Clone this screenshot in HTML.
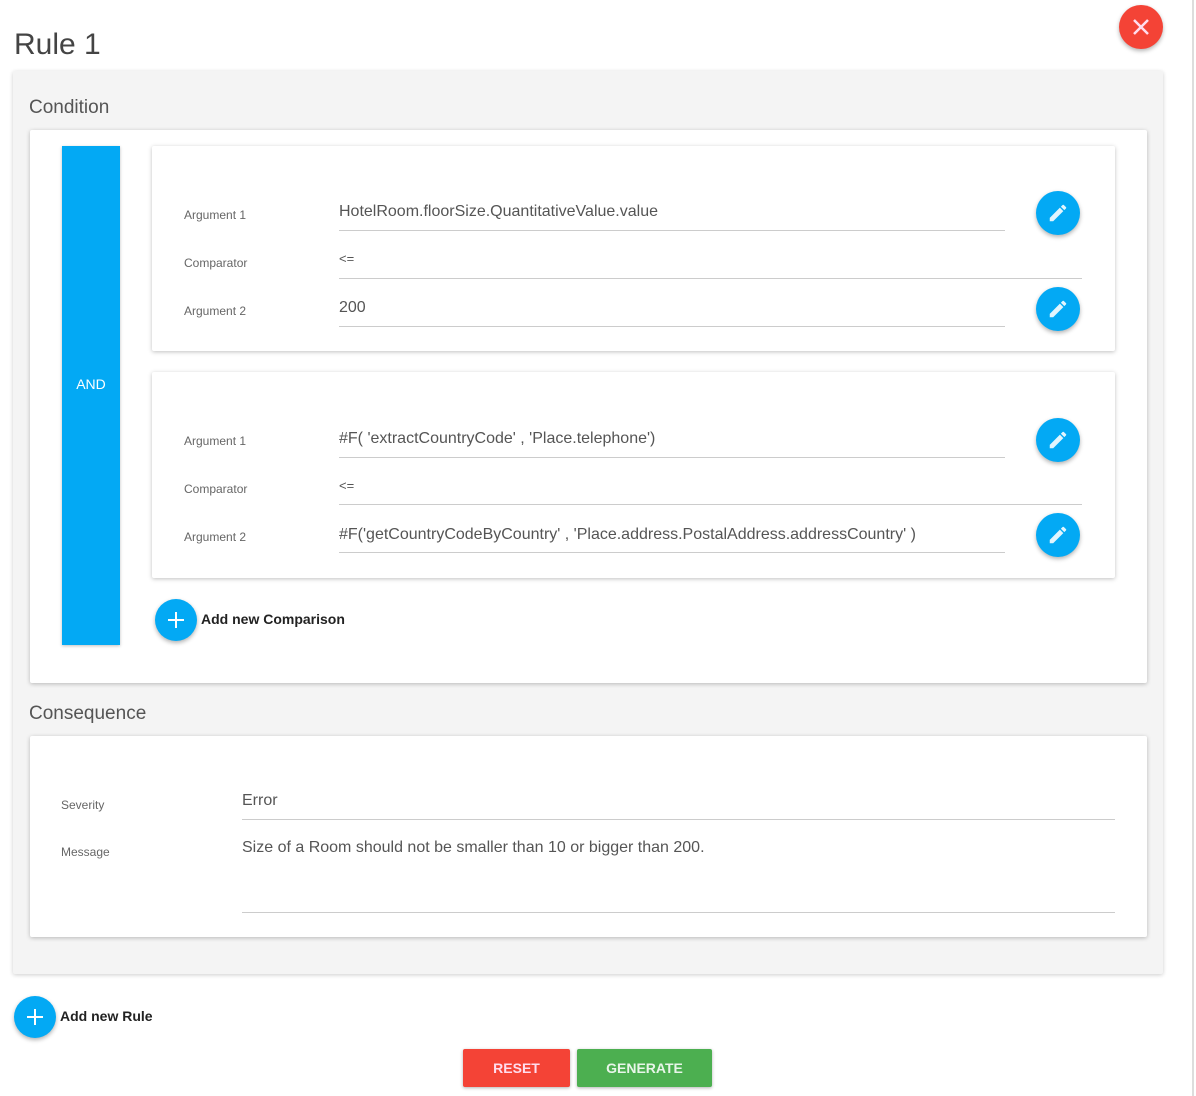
<!DOCTYPE html>
<html><head><meta charset="utf-8"><style>
*{box-sizing:border-box;margin:0;padding:0}
body{width:1196px;height:1096px;background:#fff;font-family:"Liberation Sans",sans-serif;position:relative;overflow:hidden;color:#333}
.a{position:absolute}
.card{position:absolute;background:#fff;box-shadow:0 1px 4px rgba(0,0,0,.25);border-radius:2px}
.lbl{position:absolute;font-size:12px;color:#666;line-height:14px}
.val{position:absolute;font-size:16px;color:#555;line-height:18px}
.ln{position:absolute;height:1px;background:#ccc}
.fab{position:absolute;border-radius:50%;background:#03a9f4;box-shadow:0 2px 4px rgba(0,0,0,.3);display:flex;align-items:center;justify-content:center}
.bold{position:absolute;font-size:14px;font-weight:bold;color:#222}
</style></head><body>
<div class="a" style="left:1192px;top:0;width:2px;height:1096px;background:#ddd"></div>
<div class="a" style="left:14px;top:26px;font-size:30px;color:#444;line-height:38px">Rule 1</div>
<div class="fab" style="left:1119px;top:5px;width:44px;height:44px;background:#f44336">
<svg width="18" height="18" viewBox="0 0 18 18"><path d="M2 2L16 16M16 2L2 16" stroke="#fde" stroke-width="2.5"/></svg></div>

<div class="a" style="left:13px;top:71px;width:1150px;height:903px;background:#f4f4f4;box-shadow:0 1px 4px rgba(0,0,0,.2);border-radius:2px"></div>
<div class="a" style="left:29px;top:97px;font-size:19px;color:#555;line-height:22px">Condition</div>
<div class="card" style="left:30px;top:130px;width:1117px;height:553px"></div>
<div class="a" style="left:62px;top:146px;width:58px;height:499px;background:#03a9f4;box-shadow:0 1px 3px rgba(0,0,0,.25)"></div>
<div class="a" style="left:62px;top:376px;width:58px;text-align:center;color:#fff;font-size:14px">AND</div>

<div class="card" style="left:152px;top:146px;width:963px;height:205px"></div>
<div class="lbl" style="left:184px;top:208px">Argument 1</div>
<div class="val" style="left:339px;top:203px">HotelRoom.floorSize.QuantitativeValue.value</div>
<div class="ln" style="left:339px;top:230px;width:666px"></div>
<div class="lbl" style="left:184px;top:256px">Comparator</div>
<div class="val" style="left:339px;top:250px;font-size:13px">&lt;=</div>
<div class="ln" style="left:339px;top:278px;width:743px"></div>
<div class="lbl" style="left:184px;top:304px">Argument 2</div>
<div class="val" style="left:339px;top:299px">200</div>
<div class="ln" style="left:339px;top:326px;width:666px"></div>

<div class="card" style="left:152px;top:372px;width:963px;height:206px"></div>
<div class="lbl" style="left:184px;top:434px">Argument 1</div>
<div class="val" style="left:339px;top:430px">#F( 'extractCountryCode' , 'Place.telephone')</div>
<div class="ln" style="left:339px;top:457px;width:666px"></div>
<div class="lbl" style="left:184px;top:482px">Comparator</div>
<div class="val" style="left:339px;top:477px;font-size:13px">&lt;=</div>
<div class="ln" style="left:339px;top:504px;width:743px"></div>
<div class="lbl" style="left:184px;top:530px">Argument 2</div>
<div class="val" style="left:339px;top:526px">#F('getCountryCodeByCountry' , 'Place.address.PostalAddress.addressCountry' )</div>
<div class="ln" style="left:339px;top:552px;width:666px"></div>

<div class="fab" style="left:1036px;top:191px;width:44px;height:44px"><svg width="22" height="22" viewBox="0 0 24 24"><path fill="#e1f5fe" d="M3 17.25V21h3.75L17.81 9.94l-3.75-3.75L3 17.25zM20.71 7.04a1 1 0 0 0 0-1.41l-2.34-2.34a1 1 0 0 0-1.41 0l-1.830 1.83 3.75 3.75 1.83-1.83z"/></svg></div>
<div class="fab" style="left:1036px;top:287px;width:44px;height:44px"><svg width="22" height="22" viewBox="0 0 24 24"><path fill="#e1f5fe" d="M3 17.25V21h3.75L17.81 9.94l-3.75-3.75L3 17.25zM20.71 7.04a1 1 0 0 0 0-1.41l-2.34-2.34a1 1 0 0 0-1.41 0l-1.83 1.83 3.75 3.75 1.83-1.83z"/></svg></div>
<div class="fab" style="left:1036px;top:418px;width:44px;height:44px"><svg width="22" height="22" viewBox="0 0 24 24"><path fill="#e1f5fe" d="M3 17.25V21h3.75L17.81 9.94l-3.75-3.75L3 17.25zM20.71 7.04a1 1 0 0 0 0-1.41l-2.34-2.34a1 1 0 0 0-1.41 0l-1.83 1.83 3.75 3.75 1.83-1.83z"/></svg></div>
<div class="fab" style="left:1036px;top:513px;width:44px;height:44px"><svg width="22" height="22" viewBox="0 0 24 24"><path fill="#e1f5fe" d="M3 17.25V21h3.75L17.81 9.94l-3.75-3.75L3 17.25zM20.71 7.04a1 1 0 0 0 0-1.41l-2.34-2.34a1 1 0 0 0-1.41 0l-1.83 1.83 3.75 3.75 1.83-1.83z"/></svg></div>

<div class="fab" style="left:155px;top:599px;width:42px;height:42px"><svg width="18" height="18" viewBox="0 0 18 18"><path d="M9 1V17M1 9H17" stroke="#fff" stroke-width="2"/></svg></div>
<div class="bold" style="left:201px;top:611px">Add new Comparison</div>

<div class="a" style="left:29px;top:703px;font-size:19px;color:#555;line-height:22px">Consequence</div>
<div class="card" style="left:30px;top:736px;width:1117px;height:201px"></div>
<div class="lbl" style="left:61px;top:798px">Severity</div>
<div class="val" style="left:242px;top:792px">Error</div>
<div class="ln" style="left:242px;top:819px;width:873px"></div>
<div class="lbl" style="left:61px;top:845px">Message</div>
<div class="val" style="left:242px;top:839px">Size of a Room should not be smaller than 10 or bigger than 200.</div>
<div class="ln" style="left:242px;top:912px;width:873px"></div>

<div class="fab" style="left:14px;top:996px;width:42px;height:42px"><svg width="18" height="18" viewBox="0 0 18 18"><path d="M9 1V17M1 9H17" stroke="#fff" stroke-width="2"/></svg></div>
<div class="bold" style="left:60px;top:1008px">Add new Rule</div>

<div class="a" style="left:463px;top:1049px;width:107px;height:38px;background:#f44336;color:#fde;font-weight:bold;font-size:14px;display:flex;align-items:center;justify-content:center;box-shadow:0 1px 3px rgba(0,0,0,.3);border-radius:2px">RESET</div>
<div class="a" style="left:577px;top:1049px;width:135px;height:38px;background:#4caf50;color:#e8f5e9;font-weight:bold;font-size:14px;display:flex;align-items:center;justify-content:center;box-shadow:0 1px 3px rgba(0,0,0,.3);border-radius:2px">GENERATE</div>
</body></html>
